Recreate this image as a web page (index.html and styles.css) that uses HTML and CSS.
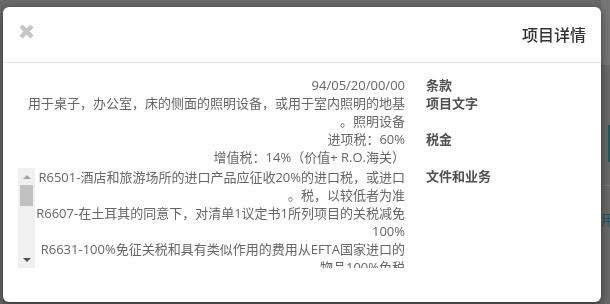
FILE: index.html
```html
<!DOCTYPE html>
<html lang="zh">

<head>
    <meta charset="UTF-8">
    <meta name="viewport" content="width=device-width, initial-scale=1.0">
    <title>项目详情</title>
    <link rel="stylesheet" href="styles.css">
</head>

<body>
    <div class="page">
        <div class="page-side">
            <div class="side-top"></div>
            <div class="side-body">
                <div class="side-tab"></div>
                <div class="side-line"></div>
                <div class="side-text">用</div>
            </div>
        </div>
    </div>

    <div class="overlay"></div>

    <div class="modal">
        <div class="modal-header">
            <button class="close-btn" title="关闭">
                <svg width="15" height="15" viewBox="0 0 15 15">
                    <path d="M2 2 L13 13 M13 2 L2 13" stroke="#c6c6c6" stroke-width="4.4" fill="none" />
                </svg>
            </button>
            <h4 class="modal-title">项目详情</h4>
        </div>

        <div class="modal-body">
            <div class="details">
                <div class="value">94/05/20/00/00</div>
                <div class="label">条款</div>

                <div class="value">用于桌子，办公室，床的侧面的照明设备，或用于室内照明的地基照明设备。</div>
                <div class="label">项目文字</div>

                <div class="value">
                    <div>进项税：60%</div>
                    <div>增值税：14%（价值+ R.O.海关）</div>
                </div>
                <div class="label">税金</div>

                <div class="scroll-box">
                    <div class="scrollbar">
                        <span class="arrow arrow-up"></span>
                        <span class="track"><span class="thumb"></span></span>
                        <span class="arrow arrow-down"></span>
                    </div>
                    <div class="scroll-content">
                        <p>R6501-酒店和旅游场所的进口产品应征收20%的进口税，或进口税，以较低者为准。</p>
                        <p>R6607-在土耳其的同意下，对清单1议定书1所列项目的关税减免100%</p>
                        <p>R6631-100%免征关税和具有类似作用的费用从EFTA国家进口的物品100%免税</p>
                        <p>R6632-从欧盟国家进口的物品，根据优惠协定减免关税50%</p>
                        <p>R6645-从经济合作组织成员国进口的物品关税减免10%</p>
                    </div>
                </div>
                <div class="label">文件和业务</div>
            </div>
        </div>
    </div>
</body>

</html>
```

FILE: styles.css
```css
html,
body {
    margin: 0;
    height: 100%;
}

body {
    font-family: "Open Sans", "Noto Sans CJK SC", sans-serif;
    font-size: 13px;
    line-height: 18px;
    background-color: #6c6c6c;
    overflow: hidden;
}

/* page behind the dialog */
.page {
    display: flex;
    justify-content: flex-end;
    height: 100%;
}

.page-side {
    width: 9px;
    overflow: hidden;
}

.side-top {
    height: 65px;
    background-color: #7a7a7a;
}

.side-body {
    padding-top: 60px;
}

.side-tab {
    margin-left: 7px;
    width: 10px;
    height: 37px;
    background-color: #1d5a63;
}

.side-line {
    margin-top: 23px;
    border-top: 1px solid #7c7c7c;
}

.side-text {
    margin-top: 24px;
    color: #1c5868;
    font-family: "Noto Sans CJK SC", sans-serif;
    font-size: 14px;
}

.overlay {
    position: fixed;
    inset: 0;
    background-color: rgba(0, 0, 0, 0.04);
}

/* dialog */
.modal {
    position: fixed;
    left: 3px;
    top: 7px;
    width: 598px;
    background-color: #fff;
    border-radius: 6px;
    box-shadow: 0 3px 9px rgba(0, 0, 0, 0.5);
}

.modal-header {
    display: flex;
    justify-content: space-between;
    align-items: flex-start;
    padding: 15px 15px 15px 16px;
    border-bottom: 1px solid #e5e5e5;
}

.close-btn {
    margin-top: 2px;
    padding: 0;
    border: none;
    background: none;
    cursor: pointer;
    line-height: 0;
}

.modal-title {
    margin: 0;
    font-family: "Noto Sans CJK SC", sans-serif;
    font-size: 16px;
    font-weight: 500;
    line-height: 25px;
    color: #333;
}

.modal-body {
    padding: 13px 15px 34px 15px;
}

.details {
    display: grid;
    grid-template-columns: 387px 1fr;
    column-gap: 21px;
}

.value {
    direction: rtl;
    text-align: right;
    color: #666;
}

.label {
    font-weight: bold;
    color: #505050;
}

.details .label:last-child {
    padding-top: 1px;
}

/* list with its own scrollbar on the left, as in rtl */
.scroll-box {
    display: flex;
    margin-top: 2px;
    height: 100px;
}

.scrollbar {
    display: flex;
    flex-direction: column;
    width: 17px;
    background-color: #f0f0f0;
}

.arrow {
    display: flex;
    justify-content: center;
    align-items: center;
    height: 17px;
}

.arrow::before {
    content: "";
    border-left: 4px solid transparent;
    border-right: 4px solid transparent;
}

.arrow-up::before {
    border-bottom: 4px solid #a3a3a3;
}

.arrow-down::before {
    border-top: 4px solid #505050;
}

.track {
    flex: 1;
    padding: 0 2px;
}

.thumb {
    display: block;
    height: 21px;
    background-color: #c1c1c1;
}

.scroll-content {
    flex: 1;
    overflow: hidden;
    direction: rtl;
    text-align: right;
    color: #666;
}

.scroll-content p {
    margin: 0;
}
```
